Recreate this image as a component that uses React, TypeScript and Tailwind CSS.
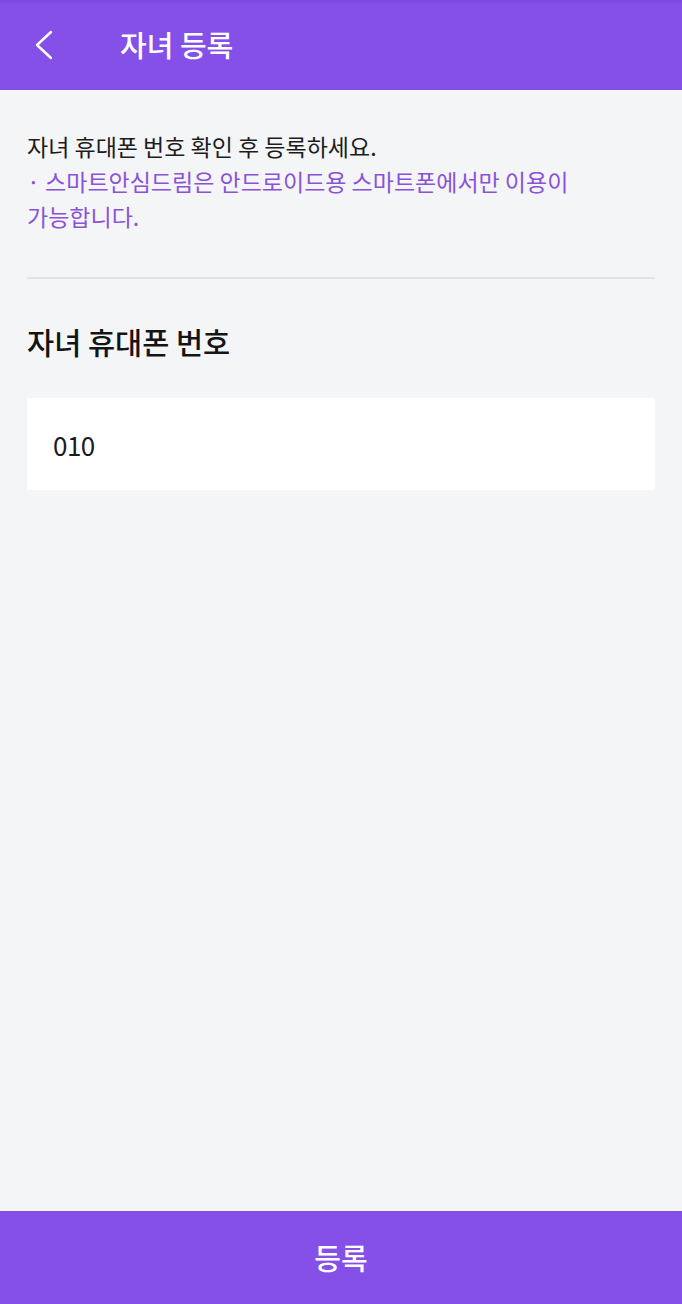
import { useState } from "react";

const FONT = "font-['Noto_Sans_CJK_KR','Noto_Sans',sans-serif]";

function BackIcon() {
  return (
    <svg width="24" height="32" viewBox="0 0 24 32" fill="none" aria-hidden>
      <path d="M17 3 L3 16 L17 29" stroke="white" strokeWidth="2.4" strokeLinecap="round" strokeLinejoin="round" />
    </svg>
  );
}

export default function App() {
  const [phone, setPhone] = useState("010");

  return (
    <div className={`${FONT} h-[1304px] w-full flex flex-col bg-[#f4f5f7] text-[#1a1a1a]`}>
      {/* Header */}
      <header className="h-[90px] shrink-0 flex items-center bg-gradient-to-b from-[#7c46dc] via-[#8550e8] to-[#8550e8] bg-[length:100%_8px] bg-no-repeat bg-[#8550e8]">
        <button className="w-[120px] pl-[34px] flex items-center h-full">
          <BackIcon />
        </button>
        <h1 className="text-[29px] font-medium text-white">자녀 등록</h1>
      </header>

      {/* Content */}
      <main className="flex-1 px-[27px]">
        <div className="pt-[39px] text-[23px] leading-[35px]">
          <p className="text-[#1c1c1c]">자녀 휴대폰 번호 확인 후 등록하세요.</p>
          <p className="text-[#8b52d9]">
            · 스마트안심드림은 안드로이드용 스마트폰에서만 이용이
            <br />
            가능합니다.
          </p>
        </div>

        <div className="mt-[43px] h-[2px] bg-[#e2e3e5]" />

        <h2 className="mt-[40px] text-[29.5px] font-medium leading-[44px] text-[#141414]">자녀 휴대폰 번호</h2>

        <div className="mt-[35px] h-[92px] bg-white flex items-center px-[26px]">
          <input
            value={phone}
            onChange={(e) => setPhone(e.target.value)}
            className="w-full bg-transparent outline-none text-[26px] text-[#1a1a1a] tracking-[-0.5px]"
          />
        </div>
      </main>

      {/* Bottom button */}
      <button className="h-[93px] shrink-0 bg-[#8550e8] text-white text-[29px] font-medium flex items-center justify-center">
        등록
      </button>
    </div>
  );
}
